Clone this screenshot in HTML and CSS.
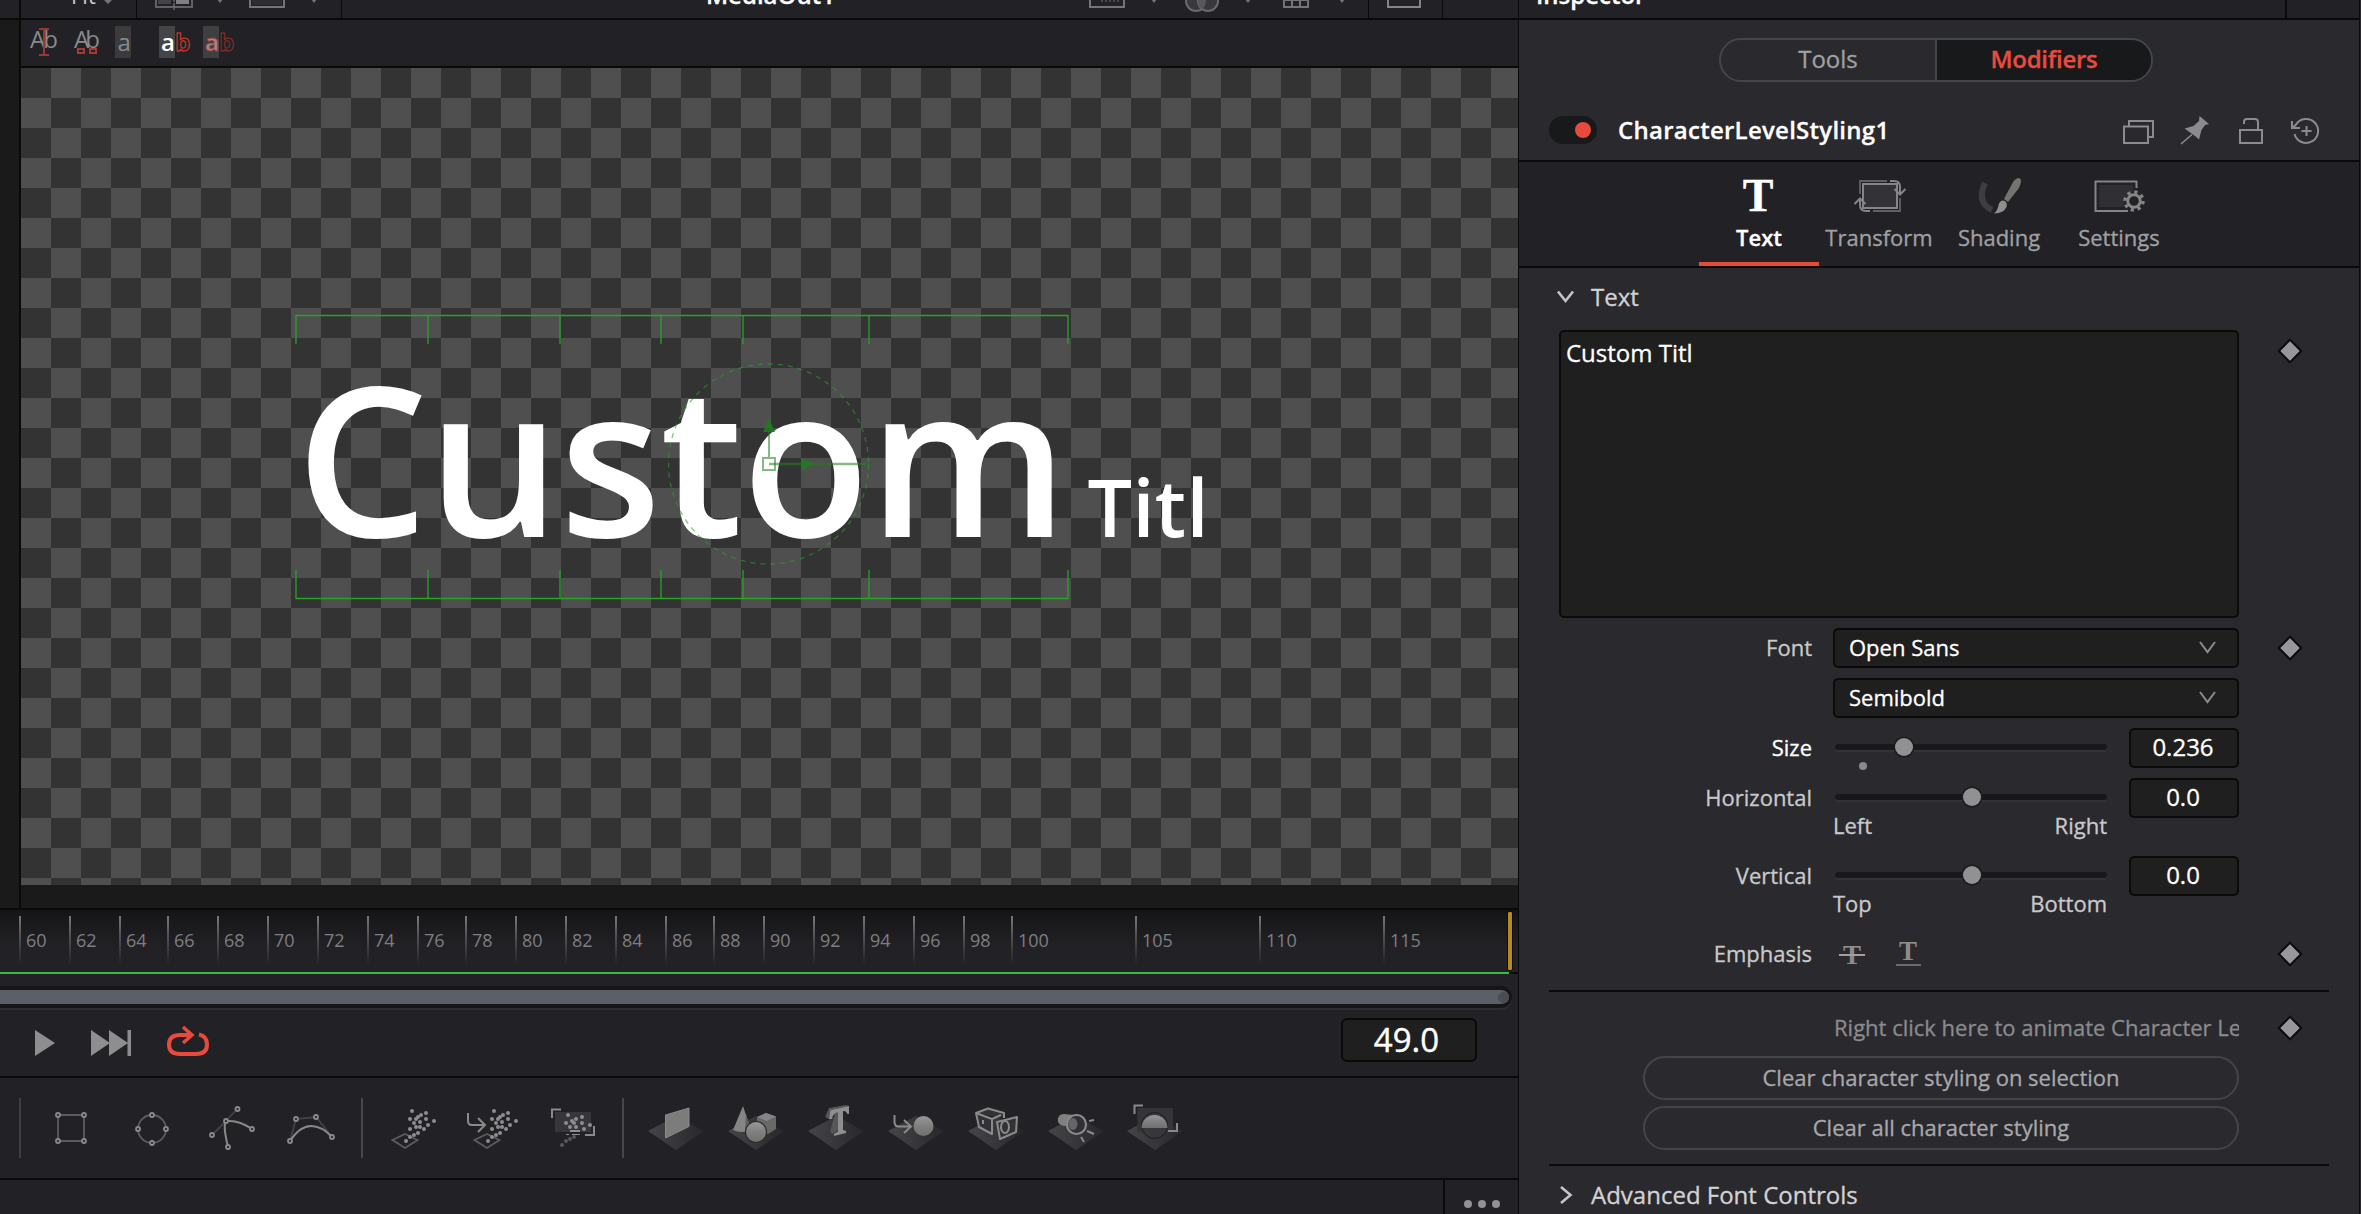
FILE: index.html
```html
<!DOCTYPE html>
<html lang="en">
<head>
<meta charset="utf-8">
<title>Fusion – MediaOut1</title>
<link rel="stylesheet" href="styles.css">
</head>
<body>
<div class="app">
  <main class="viewer">
    <header class="viewer-head">
      <div class="vh-seg vh-gutter"></div>
      <div class="vh-seg vh-fit"><span class="clip-label">Fit</span><i class="drop"></i></div>
      <div class="vh-seg vh-views">
        <svg width="206" height="18" viewBox="137 0 206 18" fill="none">
          <path d="M156 -6V7H192V-6" stroke="#626264" stroke-width="2"/><path d="M158 -2h13v6h-13z" fill="#444448"/><path d="M176 -2h13v6h-13z" fill="#808082"/><path d="M174 -2V10" stroke="#8a8a8c" stroke-dasharray="4 1"/>
          <path d="M250 -6V7H284V-6" stroke="#757577" stroke-width="2"/><path d="M252 -2h30v7h-30z" fill="#2d2d33"/>
          <path d="M217 -1h6l-3 4zM311 -1h6l-3 4z" fill="#757577"/>
        </svg>
      </div>
      <div class="vh-seg vh-title"><span class="clip-title">MediaOut1</span></div>
      <div class="vh-seg vh-tools">
        <svg width="300" height="18" viewBox="1070 0 300 18" fill="none">
          <path d="M1090 -6V7H1124V-6M1284 -6V7H1308V-6M1292 -4V7M1300 -4V7M1284 0H1308" stroke="#757577" stroke-width="2"/>
          <path d="M1102 -2V2M1106 -2V2M1110 -2V2M1114 -2V2M1118 -2V2" stroke="#757577"/>
          <circle cx="1196" cy="1" r="10" stroke="#6a6a6c" stroke-width="2" fill="#39393d"/><circle cx="1208" cy="1" r="10" stroke="#6a6a6c" stroke-width="2" fill="#39393d"/><path d="M1202 -7a10 10 0 0 1 0 16a10 10 0 0 1 0 -16" fill="#58585a"/>
          <path d="M1151 -1h6l-3 4zM1245 -1h6l-3 4zM1339 -1h6l-3 4z" fill="#757577"/>
        </svg>
      </div>
      <div class="vh-seg vh-single">
        <svg width="72" height="18" viewBox="1371 0 72 18" fill="none"><path d="M1390 -6V7H1422V-6" stroke="#858587" stroke-width="2"/></svg>
      </div>
      <div class="vh-seg vh-more"></div>
    </header>

    <section class="viewport">
      <div class="gutter"></div>
      <div class="view">
        <div class="text-tools">
          <svg width="240" height="46" viewBox="21 20 240 46">
            <g font-family="Open Sans, sans-serif" font-size="24" fill="#8a8a8c">
              <text x="30" y="48" textLength="28">Ab</text>
              <path d="M39 29H49M39 55H49M44 29V55" stroke="#963930" stroke-width="2" fill="none"/>
              <text x="74" y="48" textLength="26">Ab</text>
              <path d="M78 49h6v4h-6zM90 49h6v4h-6z" stroke="#a43a31" stroke-width="2" fill="#222226"/>
              <path d="M115 26h16v32h-16z" fill="#3b3b3e"/><text x="117.500" y="50.500">a</text>
              <path d="M159 26h16v32h-16z" fill="#454548"/><text x="161" y="50.500" fill="#fff" font-weight="600">a</text>
              <text x="175" y="50.500" fill="#222226" stroke="#e8392c" stroke-width=".9" font-weight="700">b</text>
              <path d="M203 26h16v32h-16z" fill="#3f3f42"/><text x="205" y="50.500" fill="#9a8c8c" stroke="#a03a34" stroke-width=".9" font-weight="700">a</text>
              <text x="219" y="50.500" fill="#222226" stroke="#952e27" stroke-width=".9" font-weight="700">b</text>
            </g>
          </svg>
        </div>
        <div class="canvas">
          <svg class="stage" width="1497" height="817" viewBox="21 68 1497 817">
            <g font-family="Open Sans, sans-serif" font-weight="600" fill="#fff">
              <text x="296" y="537" font-size="209" textLength="772" lengthAdjust="spacing">Custom</text>
              <text x="1087.500" y="537" font-size="79" textLength="121" lengthAdjust="spacing">Titl</text>
            </g>
            <g fill="none" stroke="#26a426" stroke-width="1.300">
              <path d="M296 344V315.500H1068V344M428 315V344M560 315V344M661 315V344M743 315V344M869 315V344"/>
              <path d="M296 570V598.500H1068V570M428 598V570M560 598V570M661 598V570M743 598V570M869 598V570"/>
              <circle cx="768.500" cy="464" r="100" stroke-dasharray="5 5" stroke-opacity=".6"/>
            </g>
            <g stroke="#1f7d1f" stroke-opacity=".55" fill="none">
              <path d="M769 464H869" stroke-width="2.500"/><path d="M769 457V432" stroke-width="2"/>
              <rect x="763" y="458" width="12" height="12" stroke-width="2"/>
            </g>
            <path d="M763 432L769 418L775 432ZM801 458L815 464L801 470Z" fill="#1f7d1f" fill-opacity=".85"/>
          </svg>
        </div>
        <div class="letterbox"></div>
      </div>
    </section>

    <section class="ruler">
      <div class="ticks">
        <span class="tick">60</span><span class="tick">62</span><span class="tick tight">64</span><span class="tick">66</span><span class="tick">68</span><span class="tick">70</span><span class="tick">72</span><span class="tick">74</span><span class="tick tight">76</span><span class="tick">78</span><span class="tick">80</span><span class="tick">82</span><span class="tick">84</span><span class="tick tight">86</span><span class="tick">88</span><span class="tick">90</span><span class="tick">92</span><span class="tick">94</span><span class="tick">96</span><span class="tick tight">98</span><span class="tick wide">100</span><span class="tick wide">105</span><span class="tick wide">110</span><span class="tick last">115</span>
      </div>
      <div class="out-point"></div>
    </section>
    <div class="range"></div>
    <div class="scroll"><div class="thumb"><i></i></div></div>

    <section class="transport">
      <svg width="230" height="66" viewBox="0 1010 230 66">
        <g fill="#8e8e90"><path d="M35 1030L55 1043L35 1056ZM91 1030L110 1043L91 1056ZM109 1030L128 1043L109 1056ZM127.500 1030h3.500v26h-3.500z"/></g>
        <path d="M190 1035H180Q169 1035 169 1044.500T180 1054H196Q207 1054 207 1044.500Q207 1036 199 1034.500" fill="none" stroke="#e84a3c" stroke-width="4"/>
        <path d="M183 1027L192 1035L183 1043" fill="none" stroke="#e84a3c" stroke-width="3.500"/>
      </svg>
      <div class="timecode">49.0</div>
    </section>

    <section class="toolbar">
      <div class="group">
        <svg viewBox="0 0 80 80"><g class="shape"><path d="M27 27H53V53H27Z"/></g><g class="pt"><circle cx="27" cy="27" r="2"/><circle cx="53" cy="27" r="2"/><circle cx="53" cy="53" r="2"/><circle cx="27" cy="53" r="2"/></g></svg>
        <svg viewBox="0 0 80 80"><g class="shape"><circle cx="41" cy="41" r="14"/></g><g class="pt"><circle cx="41" cy="27" r="2"/><circle cx="55" cy="41" r="2"/><circle cx="41" cy="55" r="2"/><circle cx="27" cy="41" r="2"/></g></svg>
        <svg viewBox="0 0 80 80"><g class="shape dim"><path d="M46 21L35 33L21 47"/></g><g class="shape lit"><path d="M37 59Q31 34 36 33Q48 32 61 41"/></g><g class="pt"><circle cx="46.500" cy="21" r="2"/><circle cx="35" cy="33" r="2"/><circle cx="21" cy="47" r="2"/><circle cx="61" cy="41" r="2"/><circle cx="37" cy="59" r="2"/></g></svg>
        <svg viewBox="0 0 80 80"><g class="shape dim"><path d="M19 53L25 31L45 29L61 49"/></g><g class="shape lit"><path d="M19 53Q29 38 40 38T61 49"/></g><g class="pt"><circle cx="25" cy="31" r="2"/><circle cx="45" cy="29" r="2"/><circle cx="19" cy="53" r="2"/><circle cx="61" cy="49" r="2"/></g></svg>
      </div>
      <i class="sep"></i>
      <div class="group">
        <svg viewBox="0 0 80 80"><defs><g id="spray" fill="#8e8e90"><circle cx="40" cy="23" r="2"/><circle cx="54" cy="25" r="2"/><circle cx="49" cy="27" r="2"/><circle cx="46" cy="29" r="2"/><circle cx="38" cy="31" r="2"/><circle cx="44" cy="31" r="2"/><circle cx="54" cy="31" r="2"/><circle cx="48" cy="34" r="2"/><circle cx="62" cy="33" r="2"/><circle cx="42" cy="35" r="2"/><circle cx="56" cy="37" r="2"/><circle cx="44" cy="39" r="2"/><circle cx="48" cy="39" r="2"/><circle cx="38" cy="41" r="2"/><circle cx="52" cy="41" r="2"/><circle cx="46" cy="45" r="2"/><circle cx="42" cy="47" r="2"/><circle cx="38" cy="49" r="2"/><circle cx="34" cy="53" r="2"/></g></defs><g class="shape"><path d="M20.500 52L33 46L45.500 52L33 60Z"/></g><use href="#spray"/></svg>
        <svg viewBox="0 0 80 80"><g class="shape"><path d="M22.500 52L35 46L47.500 52L35 60Z"/></g><g class="shape lit"><path d="M16 25V33Q16 37 20 37H32M26 30L33 37L26 44"/></g><use href="#spray" x="2"/></svg>
        <svg viewBox="0 0 80 80"><path d="M23 24H59V44H23Z" fill="#37373b"/><g class="shape lit"><path d="M20 30V21.500H29M62 38V47H53"/></g><g fill="#8e8e90"><circle cx="36" cy="27" r="2"/><circle cx="50" cy="29" r="2"/><circle cx="44" cy="31" r="2"/><circle cx="40" cy="33" r="2"/><circle cx="34" cy="35" r="2"/><circle cx="42" cy="35" r="2"/><circle cx="50" cy="35" r="2"/><circle cx="58" cy="37" r="2"/><circle cx="38" cy="39" r="2"/><circle cx="44" cy="39" r="2"/><circle cx="52" cy="41" r="2"/><path d="M38 42h10v2H38zM34 46h3v1h-3zM40 46h8v1h-8z"/></g><g fill="#58585b"><circle cx="42" cy="49" r="2"/><circle cx="38" cy="51" r="2"/><circle cx="34" cy="53" r="2"/><circle cx="30" cy="57" r="2"/></g></svg>
      </div>
      <i class="sep"></i>
      <div class="group last">
        <svg viewBox="0 0 80 80"><defs><linearGradient id="floorFill"><stop offset="0" stop-color="#46464a"/><stop offset="1" stop-color="#27272b"/></linearGradient><linearGradient id="ballFill" x2="0" y2="1"><stop offset="0" stop-color="#989898"/><stop offset=".5" stop-color="#808080"/><stop offset="1" stop-color="#707070"/></linearGradient><path id="floor" d="M12 43L40 28L68 43L40 62Z" fill="url(#floorFill)"/></defs><use href="#floor"/><path d="M29.500 27L53 20V38.500L29.500 50Z" fill="#7c7c7c" stroke="#8a8a8a" stroke-linejoin="round"/></svg>
        <svg viewBox="0 0 80 80"><use href="#floor"/><path d="M27 18L35 42Q26 46 17 42Z" fill="#858585"/><path d="M30 26L35 42Q32 44 29 44Z" fill="#606060"/><path d="M41 29L50 25L60 28.500V41L52 46L41 42Z" fill="#696969"/><path d="M41 29L50 25L60 28.500L51 33Z" fill="#858585"/><circle cx="40" cy="44" r="11" fill="#29292b"/><circle cx="40" cy="44" r="10" fill="url(#ballFill)"/></svg>
        <svg viewBox="0 0 80 80"><use href="#floor"/><path d="M33 20L50 17L53 18L35 22L33 31L29 29ZM39 25L42 25L42 42L37 46L34 44Z" fill="#55555a"/><path d="M34.500 22L53 18V26H51Q51 23 47 23V42L50 43V45L38 48V46L42 43.500V24.500Q37 25 36 31L33 31Z" fill="#8e8e8e"/></svg>
        <svg viewBox="0 0 80 80"><use href="#floor"/><g class="shape lit"><path d="M18.500 27V34Q18.500 38.500 23 38.500H34M28 32L35 38.500L28 45"/></g><circle cx="47.500" cy="38" r="10" fill="url(#ballFill)"/></svg>
        <svg viewBox="0 0 80 80"><use href="#floor"/><g class="shape lit" stroke-linejoin="round"><path d="M20 25L32 20.500L48 25V30M20 25L36 31V46L23 39ZM36 31L45 27" fill="#323236"/><path d="M41 34L61 29L60 44L44 51Z" fill="#323236"/><ellipse cx="49" cy="39" rx="4" ry="6"/><path d="M27 32V36"/></g></svg>
        <svg viewBox="0 0 80 80"><use href="#floor"/><path d="M22 34Q21 26 28 26L38 27V42L30 38Q24 38 22 34" fill="#808080"/><circle cx="40.500" cy="36.500" r="9.500" fill="#303034" stroke="#8a8a8a" stroke-width="2.200"/><ellipse cx="37" cy="36" rx="4.500" ry="6" fill="#66666a"/><g class="shape lit"><path d="M53 33L58 32M51 43L58 46M45 49L48 54"/></g></svg>
        <svg viewBox="0 0 80 80"><use href="#floor" x="-1"/><path d="M21.500 20H57V44H21.500Z" fill="#353539"/><circle cx="38.500" cy="37.500" r="13" fill="#37373b" stroke="#1d1d20"/><path d="M25.500 40A13 13 0 1 1 51.500 40Z" fill="url(#ballFill)"/><g class="shape lit"><path d="M18.500 26V17.500H27M61 35V43H52"/></g></svg>
      </div>
    </section>
    <footer class="nodes-head"><div class="dots"><i></i><i></i><i></i></div></footer>
  </main>

  <aside class="inspector">
    <header class="insp-head"><span class="clip-title">Inspector</span><div class="insp-menu"></div></header>
    <div class="insp-top">
      <div class="segmented"><button class="seg">Tools</button><button class="seg on">Modifiers</button></div>
      <div class="modifier">
        <span class="toggle"><i></i></span>
        <span class="mod-name">CharacterLevelStyling1</span>
        <div class="mod-icons">
          <svg viewBox="0 0 40 40"><path d="M6 16.500H30V33H6ZM11 16V11H35V27H30"/></svg>
          <svg viewBox="0 0 40 40"><path d="M7 34L18 24.500" stroke-width="1.600"/><path d="M25.500 6L35 14L31 15L27.500 20L25 29.500L21 26L10.500 18.500L19.500 16L25 11Z" fill="#8c8c8e" stroke="none"/></svg>
          <svg viewBox="0 0 40 40"><path d="M10 20H32V33H10ZM14 14V12Q14 9 17 9H25Q28 9 28 12V20"/></svg>
          <svg viewBox="0 0 40 40"><path d="M8.500 24A12 12 0 1 0 10 14.500L6.500 18M6 11V18H14M20.500 16V26M15.500 21H25.500"/></svg>
        </div>
      </div>
    </div>
    <nav class="tabs">
      <div class="tab on"><span class="serif-t">T</span><span>Text</span></div>
      <div class="tab"><svg viewBox="0 0 60 40"><path d="M14 8H48V32H14Z" fill="#333337"/><path d="M11 18V5H38M51 22V35H24" stroke="#626264" stroke-width="1.800"/><path d="M41 5H45Q51 5 51 11V17M45.500 13L51 18.500L56.500 13M21 35H17Q11 35 11 29V23M5.500 28L11 22.500L16.500 28"/></svg><span>Transform</span></div>
      <div class="tab"><svg viewBox="0 0 60 40"><path d="M16 7Q7 26 23 34" stroke="#3e3e42" stroke-width="6"/><path d="M50 2Q54 3 50 12L39 26L35 23L44 6Q47 2 50 2Z" fill="#747472" stroke="none"/><path d="M33.500 24.500Q39 25 37.500 31Q35 37 25 37.500Q29 34 29.500 29Q30.500 25 33.500 24.500Z" fill="#908f8c" stroke="none"/></svg><span>Shading</span></div>
      <div class="tab"><svg viewBox="0 0 60 40"><path d="M39 35H6.500V5.500H47.500V12"/><path d="M10 9H44V16L36 22L35 31H10Z" fill="#303034" stroke="none"/><circle cx="45" cy="25" r="6.300" stroke-width="3"/><circle cx="45" cy="25" r="9" stroke-width="3.400" stroke-dasharray="3.200 3.870"/></svg><span>Settings</span></div>
    </nav>

    <div class="section-head"><svg viewBox="0 0 20 20"><path d="M2 4.500L9.500 14L17 4.500"/></svg><span>Text</span></div>
    <div class="text-row"><div class="textbox">Custom Titl</div><i class="key"></i></div>

    <div class="form">
      <div class="row"><label>Font</label><div class="select"><span>Open Sans</span><svg viewBox="0 0 20 20"><path d="M2 4L9.500 14L17 4"/></svg></div><i class="key"></i></div>
      <div class="row"><label></label><div class="select"><span>Semibold</span><svg viewBox="0 0 20 20"><path d="M2 4L9.500 14L17 4"/></svg></div></div>
      <div class="row"><label class="bright">Size</label><div class="slide"><div class="track"><i class="mark"></i><i class="knob" style="left:25.400%"></i></div><div class="value">0.236</div></div></div>
      <div class="row"><label>Horizontal</label><div class="slide"><div class="track"><i class="knob"></i></div><div class="value">0.0</div></div></div>
      <div class="ends"><span>Left</span><span>Right</span></div>
      <div class="row flush"><label>Vertical</label><div class="slide"><div class="track"><i class="knob"></i></div><div class="value">0.0</div></div></div>
      <div class="ends"><span>Top</span><span>Bottom</span></div>
      <div class="row flush"><label>Emphasis</label><div class="emphasis">
        <svg width="90" height="40" viewBox="0 0 90 40"><g font-family="Liberation Serif, serif" font-weight="700" fill="#8c8c8e"><text x="9" y="30" font-size="27">T</text><text x="65" y="26" font-size="27">T</text></g><path d="M5 21H31" stroke="#a0a0a2" stroke-width="2"/><path d="M62 31H87" stroke="#6b6b6e" stroke-width="2"/></svg>
      </div><i class="key"></i></div>
    </div>

    <hr>
    <div class="form anim">
      <div class="row"><label></label><div class="hint">Right click here to animate Character Level</div><i class="key"></i></div>
    </div>
    <div class="actions">
      <button class="pill">Clear character styling on selection</button>
      <button class="pill">Clear all character styling</button>
    </div>
    <hr class="second">
    <div class="section-head adv"><svg viewBox="0 0 20 20"><path d="M5 2L14.500 10L5 18"/></svg><span>Advanced Font Controls</span></div>
  </aside>
</div>
</body>
</html>
```
FILE: styles.css
```css
* { box-sizing: border-box; }
body { margin: 0; background: #0a0a0a; color: #c9c9cb; font: 22px/1 "Open Sans", "Noto Sans", sans-serif; }
button { font: inherit; color: inherit; background: none; border: 0; padding: 0; margin: 0; }
i { display: block; }
svg { display: block; flex: none; }

.app { display: grid; grid-template-columns: 1518px 840px; column-gap: 1px; width: 2361px; height: 1214px; overflow: hidden; background: linear-gradient(90deg, #0a0a0a 2360px, #2a292e 2360px); }
.viewer { display: flex; flex-direction: column; min-width: 0; overflow: hidden; }

.viewer-head { display: flex; gap: 1px; height: 18px; flex: none; }
.vh-seg { background: #222226; height: 18px; overflow: hidden; display: flex; }
.vh-gutter { width: 19px; }
.vh-fit { width: 115px; margin-left: 1px; padding-left: 50px; gap: 8px; }
.vh-views { width: 204px; }
.vh-title { width: 728px; padding-left: 364px; }
.vh-tools { width: 298px; margin-left: -1px; }
.vh-single { width: 73px; }
.vh-more { flex: 1; }
.clip-label, .clip-title { height: 30px; line-height: 30px; margin-top: -20px; }
.clip-title { color: #fff; font-weight: 600; font-size: 24px; -webkit-text-stroke: .3px; }
.drop { border: 4px solid transparent; border-top: 4px solid #757577; height: 4px; }

.viewport { display: flex; gap: 2px; height: 888px; margin-top: 2px; flex: none; }
.gutter { width: 19px; background: #1a1a1a; }
.view { flex: 1; display: flex; flex-direction: column; }
.text-tools { height: 46px; background: #222226; }
.canvas { height: 817px; margin-top: 2px; background: conic-gradient(#4f4f4f 25%, #333 0 50%, #4f4f4f 0 75%, #333 0) 0 0 / 60px 60px; }
.letterbox { flex: 1; background: #1a1a1a; }

.ruler { display: flex; height: 62px; margin-top: 2px; padding-left: 19px; background: linear-gradient(#151517, #222226 60%); flex: none; }
.ticks { display: flex; padding-top: 6px; }
.tick { width: 50px; height: 49px; padding-left: 7px; font-size: 18px; line-height: 48px; color: #7e7e80; background: linear-gradient(#77777a, #77777a00) 0 0 / 2px 49px no-repeat; }
.tick.tight { width: 48px; }
.tick.wide { width: 124px; }
.tick.last { width: 124px; }
.out-point { width: 6px; height: 60px; margin: 1px 0 0 0; border-radius: 2px; background: #b58b1f; border: 1px solid #0d0d0d; }
.range { height: 2px; background: linear-gradient(90deg, #3cb93f 1509px, #0a0a0a 1509px); flex: none; }
.scroll { height: 36px; padding-top: 12px; background: #222226; flex: none; }
.thumb { width: 1512px; height: 22px; border: solid #161616; border-width: 4px 3px 4px 0; border-radius: 0 11px 11px 0; background: #5b5f67; box-shadow: 0 2px #2d2d32; display: flex; align-items: center; justify-content: flex-end; }
.thumb i { width: 11px; height: 11px; border-radius: 50%; background: #4b4d52; }

.transport { display: flex; align-items: flex-start; justify-content: space-between; height: 66px; padding-right: 41px; background: #222226; flex: none; }
.timecode { width: 136px; height: 44px; margin-top: 8px; border: 2px solid #0a0a0a; border-radius: 6px; background: #1f1f1f; color: #fff; font-size: 33px; line-height: 39px; text-align: center; padding-right: 5px; -webkit-text-stroke: .4px; }

.toolbar { display: flex; align-items: center; height: 100px; margin-top: 2px; padding-left: 19px; background: #222226; flex: none; }
.group { display: flex; height: 60px; align-items: center; border-left: 2px solid #3c4046; padding-left: 10px; }
.group svg { width: 80px; height: 80px; }
.sep { width: 2px; height: 60px; margin-left: 10px; background: #47474b; }
.sep + .group { border: 0; padding-left: 9px; }
.sep + .group.last { padding-left: 12px; }
.shape { fill: none; stroke: #5c5c5e; stroke-width: 1.800; }
.shape.dim { stroke: #434346; }
.shape.lit { stroke: #8a8a8a; stroke-width: 2; }
.pt { fill: #222226; stroke: #8a8a8a; stroke-width: 1.800; }

.nodes-head { flex: 1; margin-top: 2px; background: #222226; display: flex; justify-content: flex-end; }
.dots { width: 75px; border-left: 2px solid #0a0a0a; display: flex; justify-content: center; gap: 6px; padding-top: 20px; }
.dots i { width: 8px; height: 8px; border-radius: 50%; background: #929294; }

.inspector { background: #2a292e; overflow: hidden; -webkit-text-stroke: .3px; }
.insp-head { display: flex; justify-content: space-between; height: 20px; padding-left: 17px; background: #222226; border-bottom: 2px solid #0a0a0a; overflow: hidden; }
.insp-menu { width: 74px; border-left: 2px solid #0a0a0a; }
.insp-top { height: 142px; padding-top: 18px; border-bottom: 2px solid #0a0a0a; }
.segmented { display: flex; width: 434px; height: 44px; margin-left: 200px; border: 2px solid #42464b; border-radius: 22px; overflow: hidden; font-size: 24px; line-height: 38px; }
.seg { flex: 1; padding-bottom: 2px; color: #a0a0a3; }
.seg.on { background: #17191a; border-left: 2px solid #42464b; color: #ea4b3e; font-weight: 600; letter-spacing: -.3px; }
.modifier { display: flex; align-items: center; height: 60px; margin-top: 18px; padding: 0 33px 0 30px; }
.toggle { width: 48px; height: 28px; border-radius: 14px; background: #17191a; padding: 6px; }
.toggle i { width: 16px; height: 16px; margin-left: 20px; border-radius: 50%; background: #e84a3c; }
.mod-name { margin-left: 21px; color: #fff; font-weight: 600; font-size: 24px; line-height: 32px; letter-spacing: .26px; }
.mod-icons { display: flex; gap: 16px; margin-left: auto; }
.mod-icons svg { width: 40px; height: 40px; fill: none; stroke: #8c8c8e; stroke-width: 2; }

.tabs { display: flex; justify-content: center; height: 106px; background: #222226; border-bottom: 2px solid #0a0a0a; }
.tab { width: 120px; padding-top: 14px; display: flex; flex-direction: column; align-items: center; gap: 5px; line-height: 32px; color: #a0a0a3; }
.tab svg, .serif-t { width: 60px; height: 40px; }
.tab svg { fill: none; stroke: #858587; stroke-width: 2; }
.tab.on { color: #fff; font-weight: 600; border-bottom: 4px solid #e84a3c; }
.serif-t { font: 700 46px/40px "Liberation Serif", serif; text-align: center; padding-right: 2px; }

.section-head { display: flex; align-items: center; gap: 15px; height: 57px; padding-left: 37px; font-size: 24px; line-height: 40px; color: #d2d2d4; }
.section-head svg { width: 20px; height: 20px; fill: none; stroke: #c4c4c6; stroke-width: 2.600; }
.text-row { display: flex; padding: 5px 0 0 40px; }
.textbox { width: 680px; height: 288px; padding: 5px; border: 2px solid #0a0a0a; border-radius: 5px; background: #1f1f1f; color: #fff; font-size: 24px; line-height: 32px; }
.key { width: 14px; height: 14px; background: #97979b; outline: 2px solid #0d0d0d; transform: rotate(45deg); justify-self: center; }
.text-row .key { margin: 14px 0 0 44px; }

.form { padding-top: 10px; }
.row { display: grid; grid-template-columns: 253px 427px 102px; align-items: center; height: 40px; margin: 0 0 10px 40px; }
.row label { text-align: right; line-height: 32px; padding-bottom: 2px; }
.row label + * { margin-left: 22px; }
.row label.bright { color: #fff; }
.row:has(+ .ends) { margin-bottom: 0; }
.row.flush { margin-bottom: 0; }
.row label + .select { display: flex; align-items: center; justify-content: space-between; height: 40px; margin-left: 21px; padding: 0 19px 0 14px; border: 2px solid #0a0a0a; border-radius: 5px; background: #1f1f1f; color: #fff; line-height: 30px; }
.select span { padding-bottom: 2px; }
.select svg { width: 20px; height: 20px; fill: none; stroke: #8c8c8e; stroke-width: 2; }
.slide { display: flex; align-items: center; justify-content: space-between; height: 40px; }
.track { position: relative; width: 272px; height: 6px; margin-left: 1px; margin-top: -2px; border-radius: 3px; background: #17181a; box-shadow: 0 2px #323237; }
.knob { position: absolute; left: 50.3%; top: -6px; width: 18px; height: 18px; margin-left: -9px; border-radius: 50%; background: #919193; box-shadow: 0 0 0 1.500px #1b1b1e; }
.mark { position: absolute; left: 24px; top: 18px; width: 8px; height: 8px; border-radius: 50%; background: #8a8a8c; }
.value { width: 110px; height: 40px; padding-right: 2px; border: 2px solid #0a0a0a; border-radius: 5px; background: #1f1f1f; color: #fff; font-size: 24px; line-height: 34px; text-align: center; }
.ends { display: flex; justify-content: space-between; width: 274px; height: 38px; margin-left: 314px; line-height: 15px; }
.emphasis { height: 40px; }
hr { height: 2px; width: 780px; margin: 16px 0 0 30px; border: 0; background: #0a0a0a; }
.anim { padding-top: 16px; }
.anim .row { margin-bottom: 8px; }
.hint { overflow: hidden; white-space: nowrap; line-height: 38px; height: 40px; color: #8b8b8e; }
.actions { display: flex; flex-direction: column; gap: 6px; margin-left: 124px; width: 596px; }
.pill { height: 44px; border: 2px solid #42464b; border-radius: 22px; color: #a8a8ab; line-height: 38px; padding-bottom: 2px; }
hr.second { margin-top: 14px; }
```
